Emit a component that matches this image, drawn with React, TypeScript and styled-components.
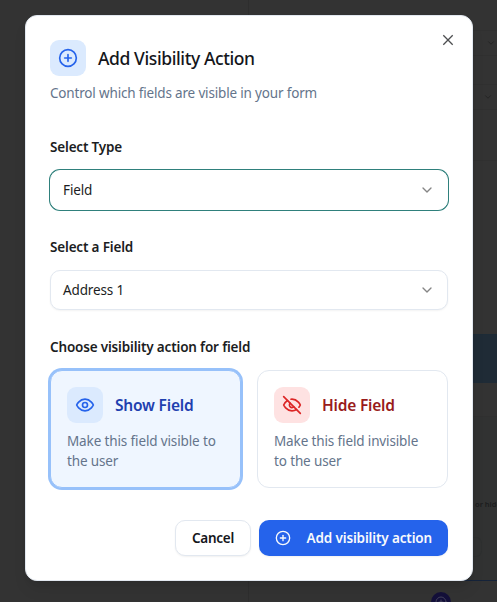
import React from "react";
import styled, { createGlobalStyle } from "styled-components";
import { ChevronDown, CirclePlus } from "lucide-react";

const GlobalStyle = createGlobalStyle`
  * { box-sizing: border-box; }
  html, body { margin: 0; padding: 0; overflow: hidden; }
  body { font-family: "Noto Sans", "Open Sans", sans-serif; color: #1b1d22; background: #333; }
  button { font: inherit; }
`;

const Screen = styled.div`
  position: relative;
  width: 497px;
  height: 602px;
  overflow: hidden;
  background: #333;
`;

const Backdrop = styled.div`
  display: grid;
  grid-template-columns: 249px 1fr;
  height: 602px;
`;

const BackdropLeft = styled.div`
  border-right: 1px solid #2e2e2e;
`;

const BackdropRight = styled.div`
  display: flex;
  flex-direction: column;
`;

const Band = styled.div<{ $h: number; $bg?: string; $line?: string }>`
  display: flex;
  align-items: center;
  justify-content: flex-end;
  flex: none;
  height: ${(p) => p.$h}px;
  background: ${(p) => p.$bg ?? "transparent"};
  border-bottom: 1px solid ${(p) => p.$line ?? "#303030"};
  color: #202020;
`;

const DimChevron = styled(ChevronDown)<{ $gap: number }>`
  margin-right: ${(p) => p.$gap}px;
`;

const DimText = styled.span`
  font-size: 7.5px;
  font-weight: 600;
  line-height: 10px;
  width: 22px;
  white-space: nowrap;
  color: #1c1d1e;
`;

const DimBox = styled.span`
  width: 10px;
  height: 20px;
  margin-right: 15px;
  border: 1px solid #2e3030;
  border-left: 0;
  border-radius: 0 6px 6px 0;
`;

const DimBadge = styled.div`
  display: flex;
  align-items: center;
  justify-content: center;
  width: 20px;
  height: 20px;
  margin: 11px 0 0 182px;
  border-radius: 50%;
  background: #14103a;
  color: #45435c;
  flex: none;
`;

const Dialog = styled.section`
  position: absolute;
  left: 25px;
  top: 15px;
  width: 448px;
  height: 566px;
  padding: 24px;
  border: 1px solid #e2e8f0;
  border-radius: 12px;
  background: #fff;
  box-shadow: 0 10px 15px -3px rgba(0, 0, 0, 0.1), 0 4px 6px -4px rgba(0, 0, 0, 0.1);
`;

const Close = styled.button`
  position: absolute;
  top: 16px;
  right: 16px;
  display: flex;
  padding: 0;
  border: 0;
  background: none;
  color: #4d4e50;
`;

const TitleRow = styled.header`
  display: flex;
  align-items: center;
  gap: 12px;
  height: 36px;
`;

const IconTile = styled.span<{ $tone: "blue" | "red" }>`
  display: flex;
  align-items: center;
  justify-content: center;
  flex: none;
  width: 36px;
  height: 36px;
  border-radius: 9px;
  background: ${(p) => (p.$tone === "blue" ? "#dbeafe" : "#fee2e2")};
  color: ${(p) => (p.$tone === "blue" ? "#2563eb" : "#dc2626")};
`;

const Text = styled.span`
  display: block;
  white-space: nowrap;
`;

const Title = styled.h2`
  margin: 0;
  font-size: 17.5px;
  font-weight: 500;
  letter-spacing: -0.4px;
  line-height: 28px;
  color: #14161b;
  white-space: nowrap;
`;

const Subtitle = styled.p`
  margin: 7px 0 0;
  font-size: 13.5px;
  line-height: 20px;
  letter-spacing: -0.17px;
  color: #64748b;
  white-space: nowrap;
`;

const Label = styled.div<{ $top: number }>`
  margin-top: ${(p) => p.$top}px;
  font-size: 13.5px;
  font-weight: 600;
  line-height: 20px;
  letter-spacing: -0.17px;
  white-space: nowrap;
`;

const Select = styled.button<{ $active?: boolean }>`
  display: flex;
  align-items: center;
  justify-content: space-between;
  width: 398px;
  height: 40px;
  margin-top: 13px;
  padding: 0 12px;
  border: 1px solid ${(p) => (p.$active ? "#fff" : "#e2e8f0")};
  border-radius: 10px;
  background: #fff;
  color: #1b1d22;
  font-size: 13.5px;
  line-height: 20px;
  letter-spacing: -0.13px;
  box-shadow: ${(p) => (p.$active ? "0 0 0 1px #2f807c" : "0 1px 2px rgba(0, 0, 0, 0.05)")};

  svg { color: #858585; }
`;

const Options = styled.div`
  display: grid;
  grid-template-columns: 191px 191px;
  gap: 16px;
  margin-top: 13px;
`;

const Option = styled.button<{ $selected?: boolean }>`
  display: block;
  height: 118px;
  padding: 16px;
  border: 1px solid ${(p) => (p.$selected ? "#97c1fa" : "#e2e8f0")};
  border-radius: 12px;
  background: ${(p) => (p.$selected ? "#eff6ff" : "#fff")};
  box-shadow: ${(p) => (p.$selected ? "0 0 0 2px #97c1fa" : "none")};
  text-align: left;
`;

const OptionTitle = styled.span<{ $tone: "blue" | "red" }>`
  font-size: 15.5px;
  font-weight: 600;
  letter-spacing: -0.2px;
  line-height: 24px;
  white-space: nowrap;
  color: ${(p) => (p.$tone === "blue" ? "#1e40af" : "#991b1b")};
`;

const OptionText = styled.span`
  display: block;
  margin-top: 8px;
  font-size: 13.5px;
  line-height: 20px;
  letter-spacing: -0.13px;
  color: #64748b;
`;

const Footer = styled.footer`
  display: flex;
  justify-content: flex-end;
  gap: 8px;
  margin-top: 32px;
`;

const Button = styled.button<{ $primary?: boolean }>`
  display: flex;
  align-items: center;
  justify-content: ${(p) => (p.$primary ? "space-between" : "center")};
  width: ${(p) => (p.$primary ? 189 : 76)}px;
  height: 36px;
  padding: ${(p) => (p.$primary ? "0 16px" : "0")};
  border: ${(p) => (p.$primary ? "0" : "1px solid #e2e8f0")};
  border-radius: 10px;
  background: ${(p) => (p.$primary ? "#2563eb" : "#fff")};
  color: ${(p) => (p.$primary ? "#f8fafc" : "#14161b")};
  font-size: 13.5px;
  font-weight: 600;
  letter-spacing: ${(p) => (p.$primary ? "-0.14px" : "-0.25px")};
  box-shadow: 0 1px 2px rgba(0, 0, 0, 0.06);
  white-space: nowrap;
`;

const StrokeIcon = styled.svg.attrs({ width: 20, height: 20, viewBox: "0 0 24 24" })`
  fill: none;
  stroke: currentColor;
  stroke-width: 2;
  stroke-linecap: round;
  stroke-linejoin: round;
`;

function EyeIcon() {
  return (
    <StrokeIcon>
      <path d="M2 12s3-7 10-7 10 7 10 7-3 7-10 7-10-7-10-7Z" />
      <circle cx="12" cy="12" r="3" />
    </StrokeIcon>
  );
}

function EyeOffIcon() {
  return (
    <StrokeIcon>
      <path d="M9.88 9.88a3 3 0 1 0 4.24 4.24" />
      <path d="M10.73 5.08A10.43 10.43 0 0 1 12 5c7 0 10 7 10 7a13.16 13.16 0 0 1-1.67 2.68" />
      <path d="M6.61 6.61A13.526 13.526 0 0 0 2 12s3 7 10 7a9.74 9.74 0 0 0 5.39-1.61" />
      <path d="M2 2 22 22" />
    </StrokeIcon>
  );
}

function CloseIcon() {
  return (
    <svg width="16" height="16" viewBox="0 0 16 16" fill="none" stroke="currentColor" strokeWidth="1.3">
      <path d="M3.3 3.3 12.7 12.7M12.7 3.3 3.3 12.7" />
    </svg>
  );
}

export default function App() {
  return (
    <>
      <GlobalStyle />
      <Screen>
        <Backdrop aria-hidden="true">
          <BackdropLeft />
          <BackdropRight>
            <Band $h={31} />
            <Band $h={25}><DimChevron size={10} $gap={1} /></Band>
            <Band $h={29} />
            <Band $h={25}><DimChevron size={10} $gap={4} /></Band>
            <Band $h={51} />
            <Band $h={174} $line="#1d2b36" />
            <Band $h={48} $bg="#1f2b36" $line="#1f2b36" />
            <Band $h={34} />
            <Band $h={77} $bg="#313232" $line="#313232" />
            <Band $h={20} $bg="#313232" $line="#313232"><DimText>or hide</DimText></Band>
            <Band $h={67} $bg="#313232" $line="#15233a"><DimBox /></Band>
            <DimBadge><CirclePlus size={12} /></DimBadge>
          </BackdropRight>
        </Backdrop>

        <Dialog role="dialog" aria-label="Add Visibility Action">
          <Close aria-label="Close"><CloseIcon /></Close>
          <TitleRow>
            <IconTile $tone="blue"><CirclePlus size={20} /></IconTile>
            <Title>Add Visibility Action</Title>
          </TitleRow>
          <Subtitle>Control which fields are visible in your form</Subtitle>

          <Label $top={34}>Select Type</Label>
          <Select $active><Text>Field</Text><ChevronDown size={16} /></Select>

          <Label $top={27}>Select a Field</Label>
          <Select><Text>Address 1</Text><ChevronDown size={16} /></Select>

          <Label $top={27}>Choose visibility action for field</Label>
          <Options>
            <Option $selected>
              <TitleRow as="span">
                <IconTile $tone="blue"><EyeIcon /></IconTile>
                <OptionTitle $tone="blue">Show Field</OptionTitle>
              </TitleRow>
              <OptionText>Make this field visible to<br />the user</OptionText>
            </Option>
            <Option>
              <TitleRow as="span">
                <IconTile $tone="red"><EyeOffIcon /></IconTile>
                <OptionTitle $tone="red">Hide Field</OptionTitle>
              </TitleRow>
              <OptionText>Make this field invisible<br />to the user</OptionText>
            </Option>
          </Options>

          <Footer>
            <Button>Cancel</Button>
            <Button $primary><CirclePlus size={16} /><Text>Add visibility action</Text></Button>
          </Footer>
        </Dialog>
      </Screen>
    </>
  );
}
